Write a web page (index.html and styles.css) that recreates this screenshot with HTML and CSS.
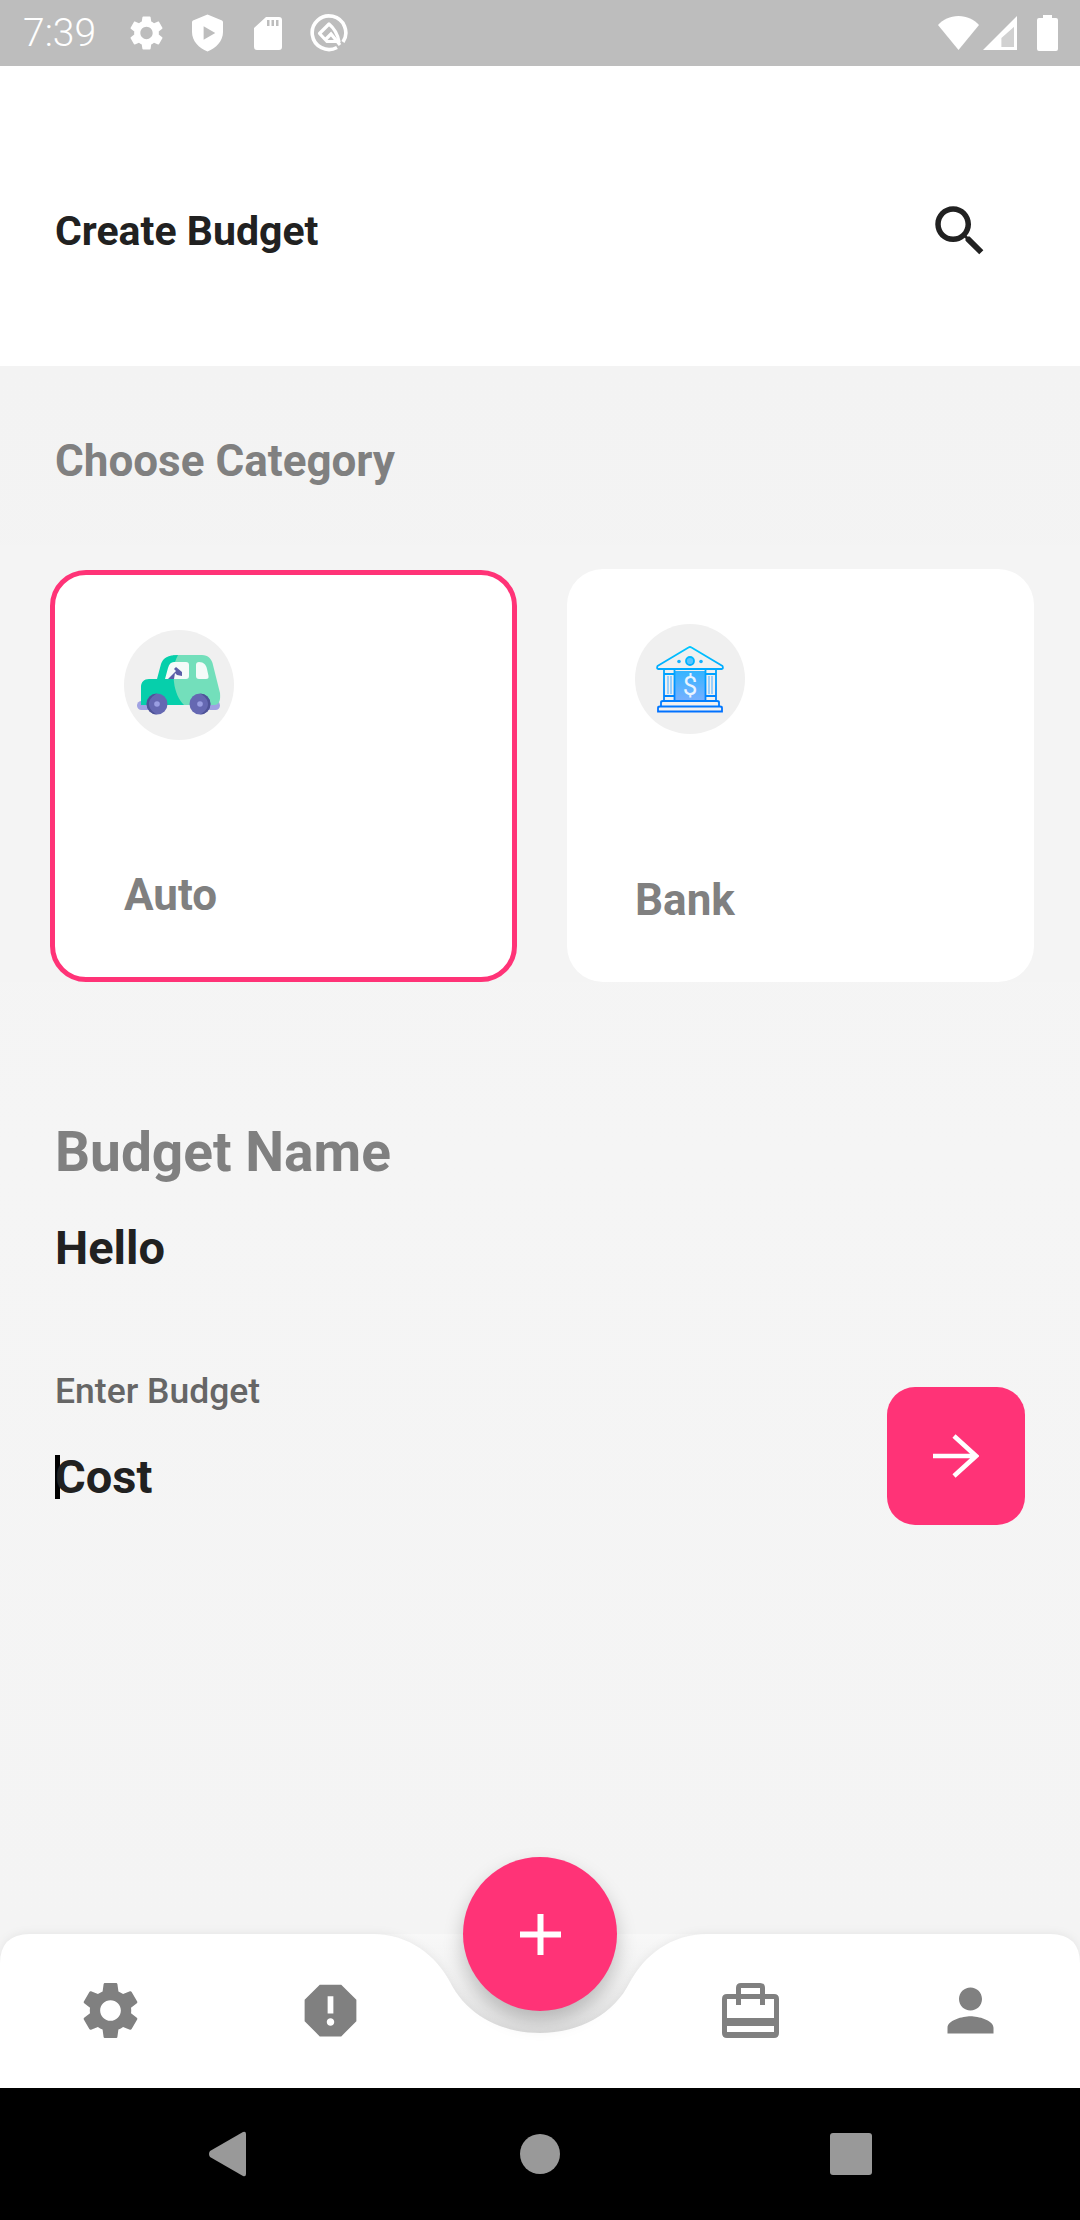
FILE: index.html
```html
<!DOCTYPE html>
<html lang="en">
<head>
<meta charset="utf-8">
<title>Create Budget</title>
<link rel="stylesheet" href="styles.css">
</head>
<body>
<div class="app">
  <div class="status">
    <span class="time">7:39</span>
    <svg class="st-gear" viewBox="2.5 1.5 19 21"><path fill="#fff" d="M19.14 12.94c.04-.3.06-.61.06-.94 0-.32-.02-.64-.07-.94l2.03-1.58c.18-.14.23-.41.12-.61l-1.92-3.32c-.12-.22-.37-.29-.59-.22l-2.39.96c-.5-.38-1.03-.7-1.62-.94l-.36-2.54c-.04-.24-.24-.41-.48-.41h-3.84c-.24 0-.43.17-.47.41l-.36 2.54c-.59.24-1.13.57-1.62.94l-2.39-.96c-.22-.08-.47 0-.59.22L2.74 8.87c-.12.21-.08.47.12.61l2.03 1.58c-.05.3-.09.63-.09.94s.02.64.07.94l-2.03 1.58c-.18.14-.23.41-.12.61l1.92 3.32c.12.22.37.29.59.22l2.39-.96c.5.38 1.03.7 1.62.94l.36 2.54c.05.24.24.41.48.41h3.84c.24 0 .44-.17.47-.41l.36-2.54c.59-.24 1.13-.56 1.62-.94l2.39.96c.22.08.47 0 .59-.22l1.92-3.32c.12-.22.07-.47-.12-.61l-2.01-1.58zM12 15.6c-1.98 0-3.6-1.62-3.6-3.6s1.62-3.6 3.6-3.6 3.6 1.62 3.6 3.6-1.62 3.6-3.6 3.6z"/></svg>
    <svg class="st-shield" viewBox="0 0 32 38"><path fill="#fff" fill-rule="evenodd" d="M16 0 L31 6 Q32 6.500 32 8 V18 C32 27 25 35 16 38 C7 35 0 27 0 18 V8 Q0 6.500 1 6 Z M12 12 V26 L24 19 Z"/></svg>
    <svg class="st-sd" viewBox="0 0 28 33"><path fill="#fff" fill-rule="evenodd" d="M12 0 H25 Q28 0 28 3 V30 Q28 33 25 33 H3 Q0 33 0 30 V11 Z M13 3 V9 H15.500 V3 Z M17.500 3 V9 H20 V3 Z M22 3 V9 H24.500 V3 Z"/></svg>
    <svg class="st-q" viewBox="0 0 38 38"><path fill="none" stroke="#fff" stroke-width="3.600" d="M27 33.500 A16.800 16.800 0 1 1 33 28"/><path fill="none" stroke="#fff" stroke-width="3.200" stroke-linejoin="round" d="M19 10 L9.500 19.500 L17 27.500 L29 27.500 C27.500 20 25 15 19 10 Z"/><path fill="none" stroke="#fff" stroke-width="3.200" d="M15 26 L21 20 L30 31"/></svg>
    <span class="st-spacer"></span>
    <svg class="st-wifi" viewBox="0 0 41 34"><path fill="#fff" d="M20.500 34 L0 9 C5 3.500 12 0 20.500 0 C29 0 36 3.500 41 9 Z"/></svg>
    <svg class="st-signal" viewBox="0 0 34 34"><path fill="#fff" fill-rule="evenodd" d="M34 0 V34 H0 Z M31 11 L18.500 22 V31 H31 Z"/><path fill="#fff" fill-opacity=".3" d="M31 11 L18.500 22 V31 H31 Z"/></svg>
    <svg class="st-batt" viewBox="0 0 21 36"><path fill="#fff" d="M6 0 H15 V3 H19 Q21 3 21 5 V34 Q21 36 19 36 H2 Q0 36 0 34 V5 Q0 3 2 3 H6 Z"/></svg>
  </div>

  <header class="head">
    <h1 class="title">Create Budget</h1>
    <svg class="search" viewBox="0 0 24 24"><path fill="#212121" d="M15.500 14h-.79l-.28-.27C15.410 12.590 16 11.110 16 9.500 16 5.910 13.090 3 9.500 3S3 5.910 3 9.500 5.910 16 9.500 16c1.610 0 3.090-.59 4.230-1.570l.27.28v.79l5 4.990L20.490 19l-4.990-5zm-6 0C7.010 14 5 11.990 5 9.500S7.010 5 9.500 5 14 7.010 14 9.500 11.990 14 9.500 14z"/></svg>
  </header>

  <main class="main">
    <h2 class="section">Choose Category</h2>
    <div class="cards">
      <div class="card card-on">
        <div class="cat-icon">
          <svg viewBox="0 0 110 110">
            <rect x="13" y="71" width="20" height="9" rx="4.500" fill="#a0a2e2"/>
            <rect x="76" y="71" width="20" height="9" rx="4.500" fill="#a0a2e2"/>
            <path fill="#73dfbb" d="M49 25 H78 C84 25 88 29 89 35 L96 63 C96.500 69 96 75 90 75 H40 Z"/>
            <path fill="#06cfab" d="M25 49 H33 L37 34 C39 28 44 25 54 25 C49 34 49 43 50 52 C51 62 55 70 60 75 H17 V57 C17 52 20 49 25 49 Z"/>
            <path fill="#f4fbf9" d="M41 49 L44 38 C45 34 47 32 50 32 H62 Q65 32 65 35 V46 Q65 49 62 49 Z"/>
            <path fill="#f4fbf9" d="M72 35 Q72 32 75 32 C80 32 82 35 83 39 L84.500 46 Q85 49 82 49 H75 Q72 49 72 46 Z"/>
            <path fill="#5a5fa8" d="M44 49 L52 41 L50 39 L52 37 L58 42 L58 46 L53 45 L51 43 L50 49 Z"/>
            <circle cx="33" cy="74" r="10.500" fill="#6568b2"/>
            <path fill="#4e5397" d="M33 63.500 A10.500 10.500 0 0 0 33 84.500 C28 82 25 78 25 74 C25 70 28 66 33 63.500 Z"/>
            <circle cx="33" cy="74" r="2.800" fill="#9a9ee2"/>
            <circle cx="76" cy="74" r="10.500" fill="#6568b2"/>
            <path fill="#4e5397" d="M76 63.500 A10.500 10.500 0 0 1 76 84.500 C81 82 84 78 84 74 C84 70 81 66 76 63.500 Z"/>
            <circle cx="76" cy="74" r="2.800" fill="#9a9ee2"/>
          </svg>
        </div>
        <span class="cat-label">Auto</span>
      </div>
      <div class="card">
        <div class="cat-icon">
          <svg viewBox="0 0 110 110">
            <defs>
              <linearGradient id="bl" gradientUnits="userSpaceOnUse" x1="0" y1="22" x2="0" y2="88"><stop offset="0" stop-color="#00c8ff"/><stop offset="1" stop-color="#0070ff"/></linearGradient>
              <linearGradient id="bp" gradientUnits="userSpaceOnUse" x1="0" y1="47" x2="0" y2="76"><stop offset="0" stop-color="#35b4ff"/><stop offset="1" stop-color="#76b0ff"/></linearGradient>
            </defs>
            <rect x="40" y="47" width="30" height="29" fill="url(#bp)"/>
            <path fill="none" stroke="url(#bl)" stroke-width="1.800" stroke-linejoin="round" d="M53.500 23.500 Q55 22.500 56.500 23.500 L87.500 42 Q88.500 44.500 87 45 H23 Q21.500 44.500 22.500 42 Z"/>
            <circle cx="55" cy="37" r="4" fill="#5cc4ff" stroke="url(#bl)" stroke-width="1.800"/>
            <circle cx="44" cy="37.500" r="1.800" fill="#12b0ff"/>
            <circle cx="66" cy="37.500" r="1.800" fill="#12b0ff"/>
            <path fill="none" stroke="url(#bl)" stroke-width="1.800" d="M29 46 V76 M39.500 46 V76 M70.500 46 V76 M81 46 V76 M29 50 H40 M29 72 H40 M70 50 H81 M70 72 H81"/>
            <path fill="none" stroke="#7cc4ff" stroke-width="1.500" d="M33 52 V70 M36 52 V70 M74 52 V70 M77 52 V70"/>
            <path fill="none" stroke="url(#bl)" stroke-width="1.800" d="M26 82 V78.500 Q26 77 28 77 H82 Q84 77 84 78.500 V82 M23 87.500 V84 Q23 82.500 25 82.500 H85 Q87 82.500 87 84 V87.500 Z"/>
            <text x="55" y="71" text-anchor="middle" class="dollar">$</text>
          </svg>
        </div>
        <span class="cat-label cat-label-b">Bank</span>
      </div>
    </div>

    <h2 class="bname">Budget Name</h2>
    <p class="hello">Hello</p>

    <div class="cost-row">
      <div class="cost-col">
        <span class="enter">Enter Budget</span>
        <div class="cost"><span class="caret"></span>Cost</div>
      </div>
      <div class="go">
        <svg viewBox="0 0 46 44"><path fill="none" stroke="#fff" stroke-width="4.600" d="M0 22 H42 M21 2 L43 22 L21 42"/></svg>
      </div>
    </div>
  </main>

  <nav class="nav">
    <svg class="nav-bg" viewBox="0 0 1080 154">
      <defs>
        <linearGradient id="nt" x1="0" y1="0" x2="0" y2="1"><stop offset="0" stop-color="#f8f8f8"/><stop offset=".45" stop-color="#f1f1f1"/><stop offset="1" stop-color="#e2e2e2"/></linearGradient>
      </defs>
      <rect x="370" y="0" width="340" height="102" fill="url(#nt)"/>
      <path class="nav-shape" fill="#fff" d="M0 154 V30 Q0 0 30 0 H372 C410 0 436 22 450 48 C466 80 500 99 540 99 C580 99 614 80 630 48 C644 22 670 0 708 0 H1050 Q1080 0 1080 30 V154 Z"/>
    </svg>
    <div class="nav-group">
      <div class="nav-item"><svg viewBox="0 0 24 24"><path fill="#808080" d="M19.140 12.940c.04-.3.06-.61.06-.94 0-.32-.02-.64-.07-.94l2.030-1.580c.18-.14.23-.41.12-.61l-1.920-3.320c-.12-.22-.37-.29-.59-.22l-2.390.96c-.5-.38-1.030-.7-1.620-.94l-.36-2.540c-.04-.24-.24-.41-.48-.41h-3.840c-.24 0-.43.17-.47.41l-.36 2.540c-.59.24-1.130.57-1.620.94l-2.390-.96c-.22-.08-.47 0-.59.22L2.740 8.870c-.12.21-.08.47.12.61l2.030 1.580c-.05.3-.09.63-.09.94s.02.64.07.94l-2.030 1.580c-.18.14-.23.41-.12.61l1.920 3.320c.12.22.37.29.59.22l2.390-.96c.5.38 1.030.7 1.620.94l.36 2.540c.05.24.24.41.48.41h3.840c.24 0 .44-.17.47-.41l.36-2.540c.59-.24 1.130-.56 1.620-.94l2.390.96c.22.08.47 0 .59-.22l1.920-3.320c.12-.22.07-.47-.12-.61l-2.010-1.580zM12 15.600c-1.980 0-3.600-1.620-3.600-3.600s1.620-3.600 3.600-3.600 3.600 1.620 3.600 3.600-1.620 3.600-3.600 3.600z"/></svg></div>
      <div class="nav-item"><svg viewBox="0 0 24 24"><path fill="#808080" d="M15.730 3H8.270L3 8.270v7.460L8.270 21h7.460L21 15.730V8.270L15.730 3zM12 17.300c-.72 0-1.300-.58-1.300-1.300 0-.72.58-1.300 1.300-1.300.72 0 1.300.58 1.300 1.300 0 .72-.58 1.300-1.300 1.300zm1-4.300h-2V7h2v6z"/></svg></div>
    </div>
    <div class="nav-group">
      <div class="nav-item"><svg class="case" viewBox="0 0 57 55"><path fill="#808080" fill-rule="evenodd" d="M14 11 V5 Q14 0 19 0 H38 Q43 0 43 5 V11 H52 Q57 11 57 16 V50 Q57 55 52 55 H5 Q0 55 0 50 V16 Q0 11 5 11 Z M19 5 V11 H38 V5 Z M5 16 V35 H52 V16 H43 V22 H38 V16 H19 V22 H14 V16 Z M5 43 V49 H52 V43 Z"/></svg></div>
      <div class="nav-item"><svg viewBox="0 0 24 24"><path fill="#808080" d="M12 12c2.210 0 4-1.790 4-4s-1.790-4-4-4-4 1.790-4 4 1.790 4 4 4zm0 2c-2.670 0-8 1.340-8 4v2h16v-2c0-2.660-5.330-4-8-4z"/></svg></div>
    </div>
    <button class="fab" type="button" aria-label="Add">
      <svg viewBox="0 0 41 41"><path fill="#fff" d="M17.500 0 H23.500 V17.500 H41 V23.500 H23.500 V41 H17.500 V23.500 H0 V17.500 H17.500 Z"/></svg>
    </button>
  </nav>

  <div class="sysnav">
    <div class="sys-item"><svg class="sys-back" viewBox="0 0 38 46"><path fill="#999" d="M38 3 V43 Q38 46 35 45 L2 26 Q0 23 2 20 L35 1 Q38 0 38 3 Z"/></svg></div>
    <div class="sys-item"><span class="sys-home"></span></div>
    <div class="sys-item"><span class="sys-recent"></span></div>
  </div>
</div>
</body>
</html>
```
FILE: styles.css
```css
* { box-sizing: border-box; }
html, body { margin: 0; padding: 0; }
body { font-family: Roboto, "Liberation Sans", sans-serif; background: #f4f4f4; }
.app { width: 1080px; height: 2220px; display: flex; flex-direction: column; overflow: hidden; }

.status { height: 66px; flex: none; background: #bdbdbd; display: flex; align-items: center; padding-left: 23px; }
.time { font-size: 39px; color: #fff; font-weight: 300; width: 107px; }
.status svg { display: block; flex: none; }
.st-gear { width: 33px; height: 36px; margin-right: 29px; }
.st-shield { width: 31px; height: 38px; margin-right: 31px; }
.st-sd { width: 28px; height: 33px; margin-right: 28px; }
.st-q { width: 38px; height: 38px; }
.st-spacer { flex: 1; }
.st-wifi { width: 41px; height: 34px; margin-right: 4px; }
.st-signal { width: 34px; height: 34px; margin-right: 20px; }
.st-batt { width: 21px; height: 36px; margin-right: 22px; }

.head { height: 300px; flex: none; background: #fff; display: flex; align-items: center; justify-content: space-between; padding: 30px 87px 0 55px; }
.title { margin: 0; font-size: 41px; line-height: 48px; font-weight: 700; color: #212121; }
.search { width: 66px; height: 66px; display: block; }

.main { flex: 1; background: linear-gradient(#f3f3f3, #f5f5f5 50%, #f4f4f4); display: flex; flex-direction: column; }
.section { margin: 73px 0 0 55px; font-size: 44px; line-height: 44px; font-weight: 700; color: #808080; }
.cards { margin-top: 62px; padding: 24px 46px 0 50px; display: flex; gap: 50px; background: #f4f4f4; }
.card { width: 467px; height: 413px; background: #fff; border-radius: 36px; padding: 55px 0 0 68px; display: flex; flex-direction: column; }
.card-on { height: 412px; margin-top: 1px; border: 5px solid #ff3377; padding: 55px 0 0 69px; }
.cat-icon { width: 110px; height: 110px; border-radius: 50%; background: #f0f0f0; flex: none; }
.cat-icon svg { display: block; width: 110px; height: 110px; }
.dollar { font-family: Roboto, sans-serif; font-size: 26px; font-weight: 400; fill: #eaf4ff; }
.cat-label { margin-top: 130px; font-size: 44px; line-height: 50px; font-weight: 700; color: #808080; }
.cat-label-b { margin-top: 141px; }

.bname { margin: 140px 0 0 55px; font-size: 55px; line-height: 60px; font-weight: 700; color: #808080; }
.hello { margin: 40px 0 0 55px; font-size: 47px; line-height: 52px; font-weight: 700; color: #212121; }

.cost-row { margin-top: 94px; padding: 0 55px; display: flex; justify-content: space-between; align-items: flex-start; }
.cost-col { display: flex; flex-direction: column; }
.enter { font-size: 35.500px; line-height: 40px; font-weight: 500; color: #666; margin-top: 3px; }
.cost { margin-top: 40px; font-size: 47px; line-height: 52px; font-weight: 700; color: #212121; display: flex; align-items: center; }
.caret { width: 5px; height: 44px; background: #000; margin-right: -5px; }
.go { width: 138px; height: 138px; border-radius: 28px; background: #ff3377; display: flex; align-items: center; justify-content: center; margin-top: 19px; }
.go svg { width: 46px; height: 44px; display: block; }

.nav { height: 154px; flex: none; position: relative; display: flex; justify-content: space-between; padding-top: 42px; }
.nav-bg { position: absolute; left: 0; top: 0; width: 1080px; height: 154px; overflow: visible; }
.nav-shape { filter: drop-shadow(0 -1px 4px rgba(0,0,0,.06)); }
.nav-group { display: flex; position: relative; }
.nav-item { width: 220px; height: 69px; display: flex; align-items: center; justify-content: center; }
.nav-item svg { width: 69px; height: 69px; display: block; }
.nav-item svg.case { width: 57px; height: 55px; }
.fab { position: absolute; left: 463px; top: -77px; width: 154px; height: 154px; border: 0; padding: 0; border-radius: 50%; background: #ff3377; box-shadow: 0 10px 20px rgba(0,0,0,.22); display: flex; align-items: center; justify-content: center; }
.fab svg { width: 41px; height: 41px; display: block; }

.sysnav { height: 132px; flex: none; background: #000; display: flex; justify-content: center; align-items: center; }
.sys-item { width: 313px; display: flex; justify-content: center; align-items: center; }
.sys-back { width: 38px; height: 46px; display: block; }
.sys-home { width: 40px; height: 40px; border-radius: 50%; background: #999; }
.sys-recent { width: 42px; height: 42px; border-radius: 3px; background: #999; margin-right: 4px; }
```
